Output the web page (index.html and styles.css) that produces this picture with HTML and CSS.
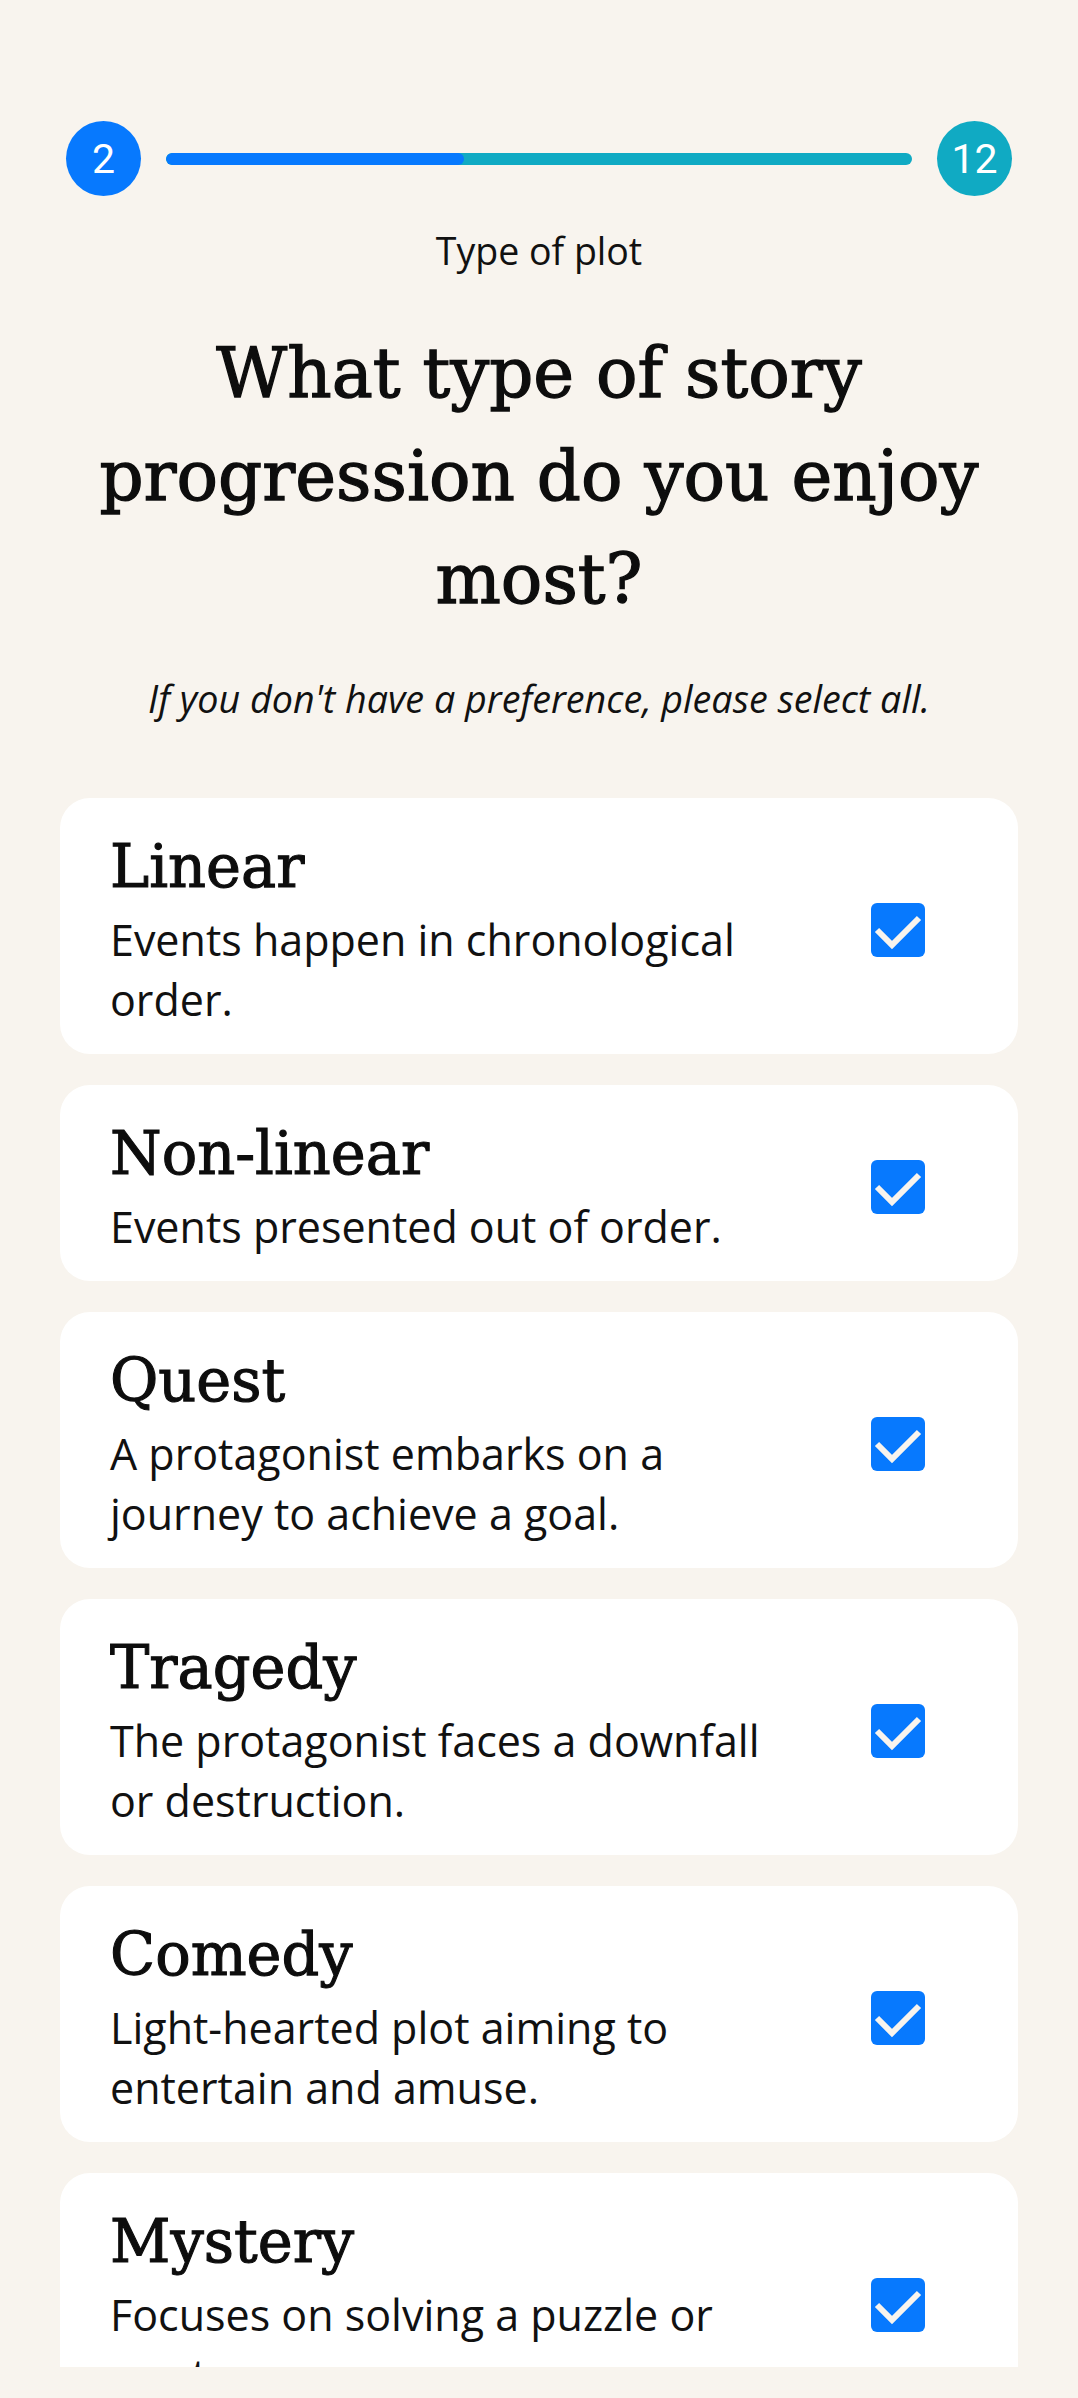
FILE: index.html
```html
<!DOCTYPE html>
<html lang="en">
<head>
<meta charset="utf-8">
<title>Type of plot</title>
<link rel="stylesheet" href="styles.css">
</head>
<body>
<main class="screen">
  <div class="progress">
    <div class="step step-current">2</div>
    <div class="track"><div class="track-fill" style="width:40%"></div></div>
    <div class="step step-total">12</div>
  </div>
  <p class="category">Type of plot</p>
  <h1 class="question">What type of story progression do you enjoy most?</h1>
  <p class="hint">If you don't have a preference, please select all.</p>

  <ul class="options">
    <li class="option">
      <div class="option-text">
        <h2 class="option-title">Linear</h2>
        <p class="option-desc">Events happen in chronological order.</p>
      </div>
      <svg class="check" viewBox="3 3 18 18" width="54" height="54" aria-hidden="true"><rect x="3" y="3" width="18" height="18" rx="2" class="check-box"/><path d="M5 12l5 5 9-9" class="check-mark"/></svg>
    </li>
    <li class="option">
      <div class="option-text">
        <h2 class="option-title">Non-linear</h2>
        <p class="option-desc">Events presented out of order.</p>
      </div>
      <svg class="check" viewBox="3 3 18 18" width="54" height="54" aria-hidden="true"><rect x="3" y="3" width="18" height="18" rx="2" class="check-box"/><path d="M5 12l5 5 9-9" class="check-mark"/></svg>
    </li>
    <li class="option">
      <div class="option-text">
        <h2 class="option-title">Quest</h2>
        <p class="option-desc">A protagonist embarks on a journey to achieve a goal.</p>
      </div>
      <svg class="check" viewBox="3 3 18 18" width="54" height="54" aria-hidden="true"><rect x="3" y="3" width="18" height="18" rx="2" class="check-box"/><path d="M5 12l5 5 9-9" class="check-mark"/></svg>
    </li>
    <li class="option">
      <div class="option-text">
        <h2 class="option-title">Tragedy</h2>
        <p class="option-desc">The protagonist faces a downfall or destruction.</p>
      </div>
      <svg class="check" viewBox="3 3 18 18" width="54" height="54" aria-hidden="true"><rect x="3" y="3" width="18" height="18" rx="2" class="check-box"/><path d="M5 12l5 5 9-9" class="check-mark"/></svg>
    </li>
    <li class="option">
      <div class="option-text">
        <h2 class="option-title">Comedy</h2>
        <p class="option-desc">Light-hearted plot aiming to entertain and amuse.</p>
      </div>
      <svg class="check" viewBox="3 3 18 18" width="54" height="54" aria-hidden="true"><rect x="3" y="3" width="18" height="18" rx="2" class="check-box"/><path d="M5 12l5 5 9-9" class="check-mark"/></svg>
    </li>
    <li class="option">
      <div class="option-text">
        <h2 class="option-title">Mystery</h2>
        <p class="option-desc">Focuses on solving a puzzle or mystery.</p>
      </div>
      <svg class="check" viewBox="3 3 18 18" width="54" height="54" aria-hidden="true"><rect x="3" y="3" width="18" height="18" rx="2" class="check-box"/><path d="M5 12l5 5 9-9" class="check-mark"/></svg>
    </li>
  </ul>
</main>
</body>
</html>
```

FILE: styles.css
```css
* { box-sizing: border-box; }

html, body {
  margin: 0;
  padding: 0;
  background: #f8f4ee;
}

body {
  height: 2398px;
  overflow: hidden;
}

.screen {
  height: 2367px;
  overflow: hidden;
  padding-top: 121px;
  color: #111;
}

.progress {
  display: flex;
  align-items: center;
  gap: 25px;
  padding: 0 66px;
}

.step {
  flex: 0 0 auto;
  width: 75px;
  height: 75px;
  border-radius: 50%;
  display: flex;
  align-items: center;
  justify-content: center;
  color: #fff;
  font-family: Roboto, "Noto Sans", sans-serif;
  font-size: 41px;
}

.step-current { background: #0779fe; }
.step-total { background: #10aac3; }

.track {
  flex: 1;
  height: 12px;
  border-radius: 6px;
  background: #10aac3;
  overflow: hidden;
}

.track-fill {
  height: 100%;
  background: #0779fe;
  border-radius: 6px;
}

.category {
  margin: 29px 0 0;
  text-align: center;
  font-family: "Open Sans", "Noto Sans", sans-serif;
  font-size: 37.5px;
  line-height: 52px;
  color: #111;
}

.question {
  margin: 45px 60px 0;
  text-align: center;
  font-family: "DejaVu Serif", "Liberation Serif", serif;
  font-weight: 400;
  font-size: 69px;
  line-height: 103px;
  color: #0d0d0d;
  -webkit-text-stroke: 1.3px #0d0d0d;
}

.hint {
  margin: 43px 0 0;
  text-align: center;
  font-family: "Open Sans", "Noto Sans", sans-serif;
  font-style: italic;
  font-size: 37.7px;
  line-height: 50px;
  color: #111;
}

.options {
  list-style: none;
  margin: 74px 60px 0;
  padding: 0;
  display: flex;
  flex-direction: column;
  gap: 31px;
}

.option {
  display: flex;
  align-items: center;
  gap: 81px;
  background: #fff;
  border-radius: 30px;
  padding: 31px 93px 24px 50px;
}

.option-text {
  flex: 1;
  min-width: 0;
}

.option-title {
  margin: 0;
  font-family: "DejaVu Serif", "Liberation Serif", serif;
  font-weight: 400;
  font-size: 59px;
  line-height: 76px;
  color: #0d0d0d;
  -webkit-text-stroke: 1.1px #0d0d0d;
}

.option-desc {
  margin: 5px 0 0;
  font-family: "Open Sans", "Noto Sans", sans-serif;
  font-size: 43px;
  line-height: 60px;
  color: #111;
}

.check {
  flex: 0 0 auto;
  display: block;
}

.check-box { fill: #0779fe; }

.check-mark {
  fill: none;
  stroke: #f8f4ee;
  stroke-width: 2;
}
```
